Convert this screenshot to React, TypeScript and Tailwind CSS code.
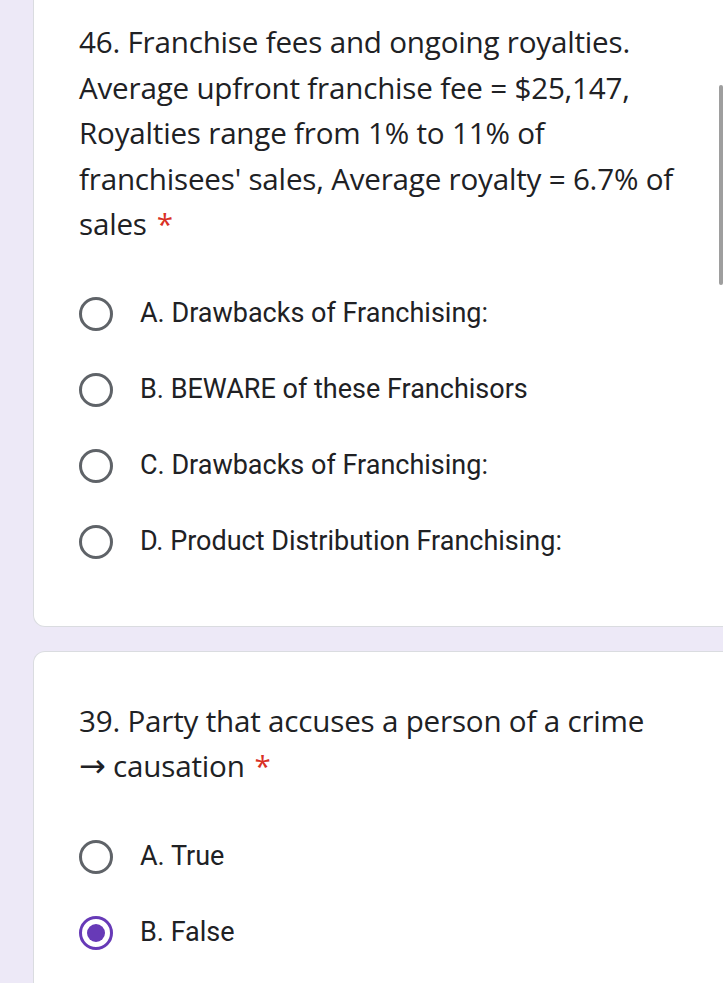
const q1Options = [
  "A. Drawbacks of Franchising:",
  "B. BEWARE of these Franchisors",
  "C. Drawbacks of Franchising:",
  "D. Product Distribution Franchising:",
];

const q2Options = ["A. True", "B. False"];

function Radio({ checked }: { checked?: boolean }) {
  if (checked) {
    return (
      <div className="flex h-[34px] w-[34px] shrink-0 items-center justify-center rounded-full border-[3px] border-[#673ab7]">
        <div className="h-[18px] w-[18px] rounded-full bg-[#673ab7]" />
      </div>
    );
  }
  return (
    <div className="h-[34px] w-[34px] shrink-0 rounded-full border-[3px] border-[#5f6368]" />
  );
}

function Option({ label, checked }: { label: string; checked?: boolean }) {
  return (
    <div className="flex h-[76px] items-center gap-[27px] pl-[45px]">
      <Radio checked={checked} />
      <span className="font-['Roboto',sans-serif] text-[27px] text-[#202124]">
        {label}
      </span>
    </div>
  );
}

export default function App() {
  return (
    <div className="relative h-[983px] w-[723px] overflow-hidden bg-[#ede9f7] font-['Open_Sans',sans-serif]">
      <div className="flex flex-col gap-[24px] pl-[33px]">
        <div className="w-[720px] rounded-b-[12px] border border-t-0 border-[#dadce0] bg-white pb-[46px] pt-[19px]">
          <h2 className="w-[670px] pl-[45px] text-[29.6px] leading-[45.5px] tracking-[-0.2px] text-[#202124]">
            46. Franchise fees and ongoing royalties. Average upfront franchise fee = $25,147, Royalties range from 1% to 11% of franchisees' sales, Average royalty = 6.7% of sales
            <span className="ml-[10px] text-[#d93025]">*</span>
          </h2>
          <div className="mt-[29px] flex flex-col">
            {q1Options.map((o) => (
              <Option key={o} label={o} />
            ))}
          </div>
        </div>
        <div className="w-[720px] rounded-t-[12px] border border-b-0 border-[#dadce0] bg-white pb-[40px] pt-[46px]">
          <h2 className="w-[670px] pl-[45px] text-[29.6px] leading-[45px] tracking-[-0.2px] text-[#202124]">
            39. Party that accuses a person of a crime{" "}
            <span className="whitespace-nowrap">
              <span className="font-['DejaVu_Sans',sans-serif] text-[32px] leading-none">→</span> causation
            </span>
            <span className="ml-[10px] text-[#d93025]">*</span>
          </h2>
          <div className="mt-[31px] flex flex-col">
            {q2Options.map((o, i) => (
              <Option key={o} label={o} checked={i === 1} />
            ))}
          </div>
        </div>
      </div>
      <div className="absolute right-0 top-[85px] h-[200px] w-[4px] rounded-full bg-[#9e9e9e]" />
    </div>
  );
}
